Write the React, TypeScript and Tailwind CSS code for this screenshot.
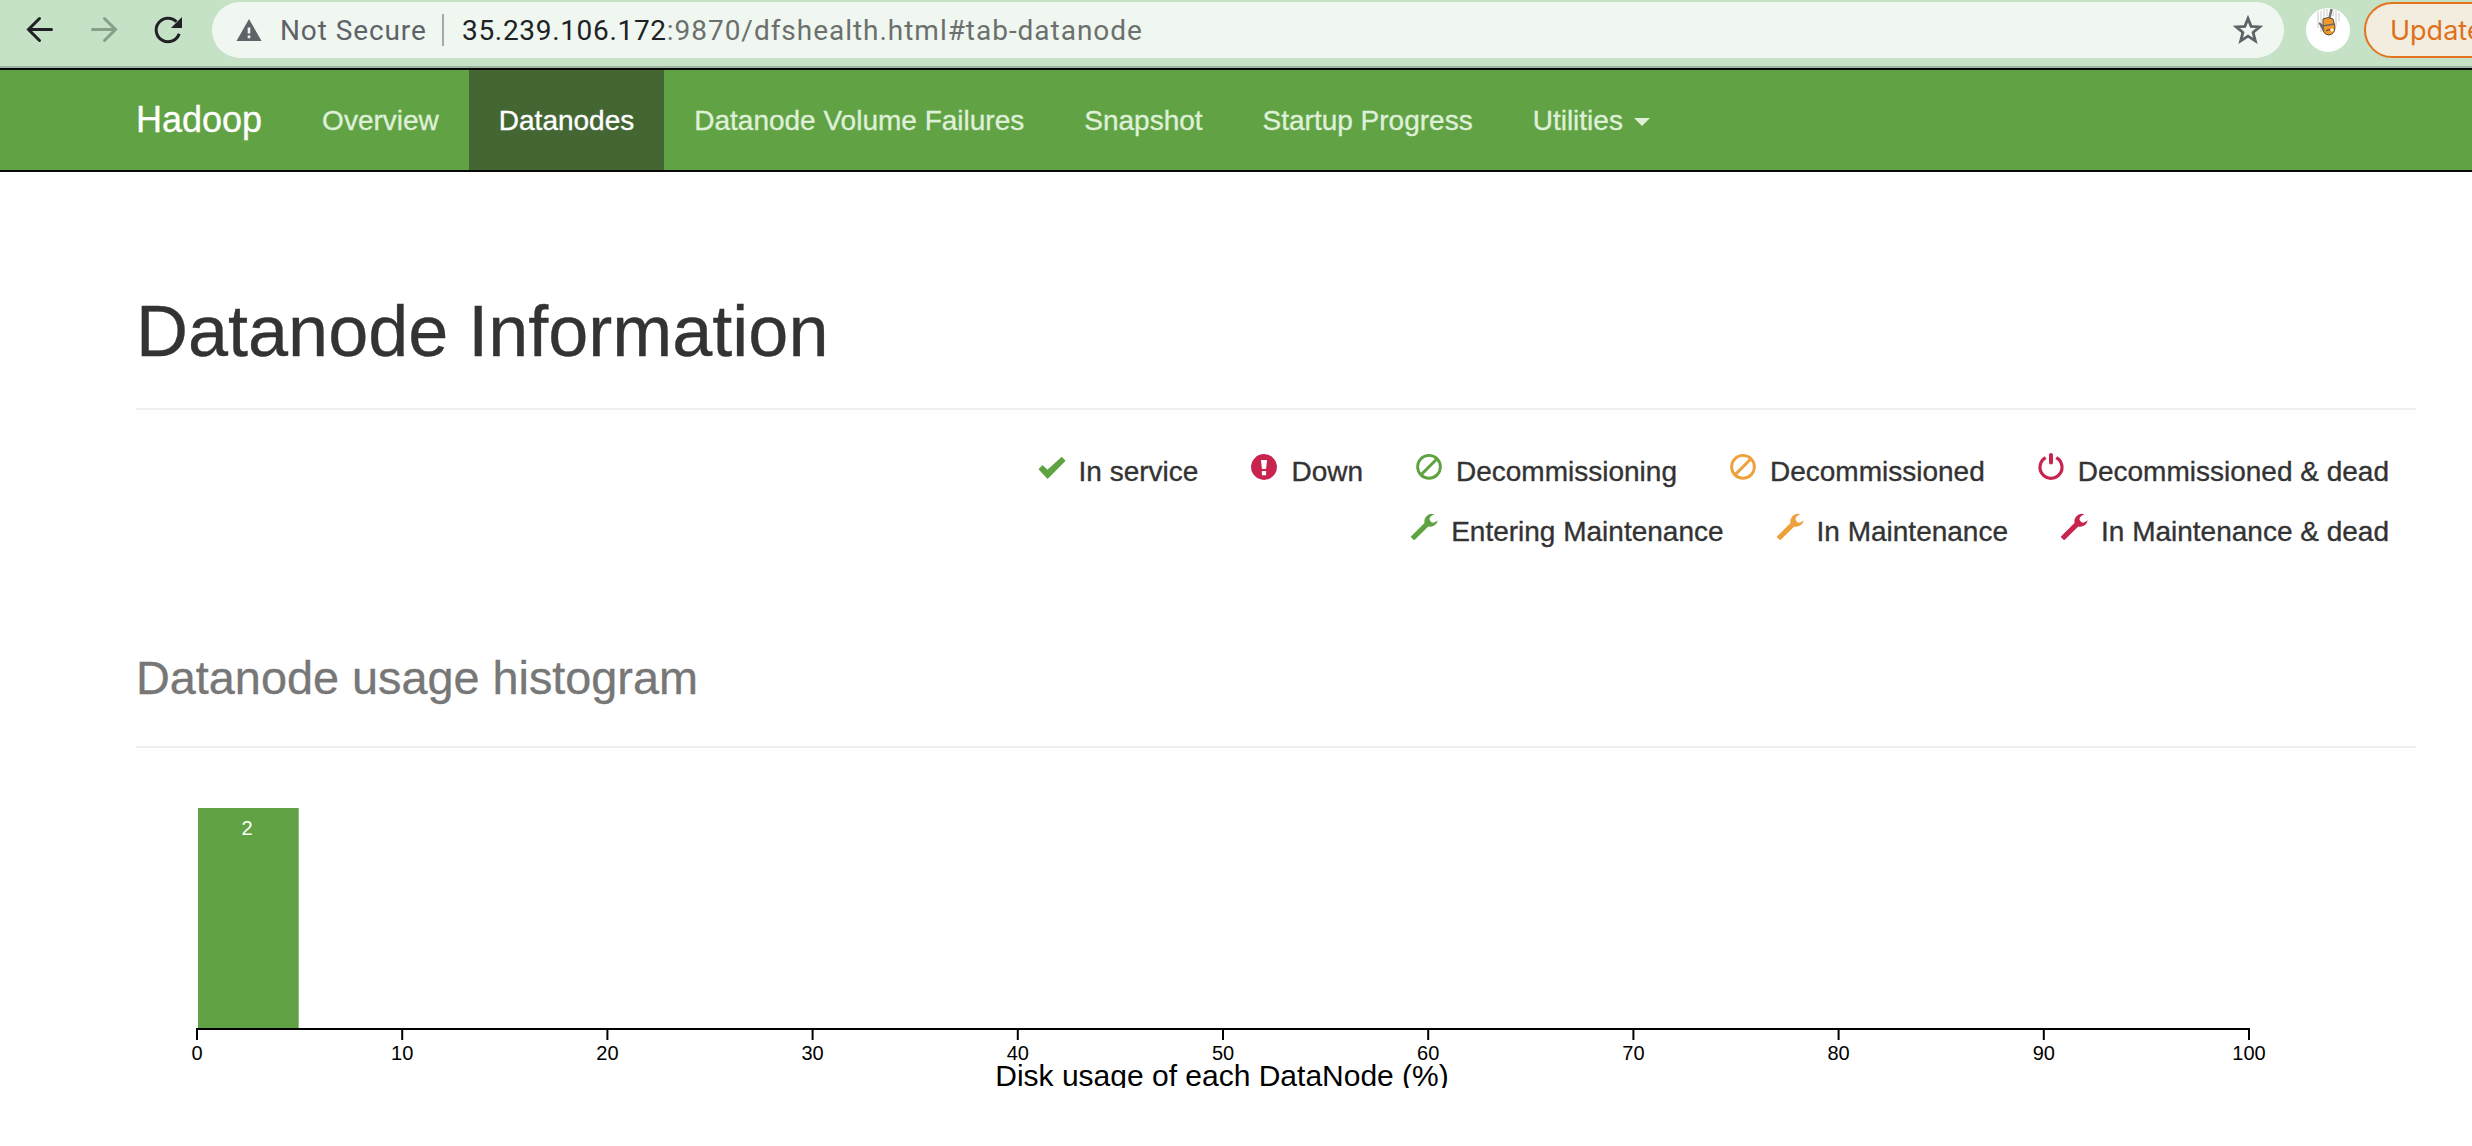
import React from "react";

const GREEN = "#5fa341";
const ORANGE = "#eea03c";
const RED = "#c7254e";

function Ok() {
  return (
    <svg className="h-7 w-7 shrink-0" viewBox="0 0 28 28">
      <path d="M.9 15.700 4.100 12.400q.5-.5 1 0l4.300 4.300L23.200 4.200q.5-.4 1 0l3 3q.4.500 0 1L10.100 25.400q-.5.5-1 0L.9 16.700q-.4-.5 0-1Z" fill={GREEN} />
    </svg>
  );
}
function Alert() {
  return (
    <svg className="h-7 w-7 shrink-0" viewBox="0 0 28 28">
      <circle cx="14" cy="14" r="12.900" fill={RED} />
      <path d="M11.700 7h4.600a.7.7 0 0 1 .7.8l-.9 7.600a.9.9 0 0 1-.9.7h-2.400a.9.9 0 0 1-.9-.7L11 7.800a.7.7 0 0 1 .7-.8Z" fill="#fff" />
      <rect x="11.900" y="18" width="4.200" height="4.200" rx=".5" fill="#fff" />
    </svg>
  );
}
function Ban({ color }: { color: string }) {
  return (
    <svg className="h-7 w-7 shrink-0" viewBox="0 0 28 28" fill="none" stroke={color} strokeWidth="2.900">
      <circle cx="14" cy="13.800" r="11.400" />
      <path d="M6.200 21.600 21.800 6" />
    </svg>
  );
}
function Power() {
  return (
    <svg className="h-7 w-7 shrink-0" viewBox="0 0 28 28" fill="none" stroke={RED} strokeWidth="3.200">
      <path d="M8.700 4.700A11 11 0 1 0 19.300 4.700" />
      <path d="M14 2V9.500" strokeLinecap="round" strokeWidth="4" />
    </svg>
  );
}
function Wrench({ color }: { color: string }) {
  return (
    <svg className="h-7 w-7 shrink-0" viewBox="0 0 28 28">
      <path d="M24.500 1.300Q19.500-.4 16.200 3.400 13.800 6.200 14.500 10L1.200 23.200q-.6.6 0 1.200l2.400 2.400q.6.600 1.200 0L18.300 13.600q3.700.8 6.700-1.600 2.500-2 2.600-4.800-2.200 2.400-4.700 2.500-2.300-.5-3.300-3-.6-3 4.900-5.400Z" fill={color} />
    </svg>
  );
}

function Item({ icon, children }: { icon: React.ReactNode; children: React.ReactNode }) {
  return (
    <li className="flex items-start gap-[13px] whitespace-nowrap">
      {icon}
      <span className="mt-[-1px] leading-10">{children}</span>
    </li>
  );
}

const NAV = ["Overview", "Datanodes", "Datanode Volume Failures", "Snapshot", "Startup Progress"];

function Chart() {
  return (
    <svg className="block" width="2280" height="340" viewBox="136 748 2280 340" fontFamily="Liberation Sans, Arial, sans-serif">
      <rect x="198" y="808" width="100.700" height="220" fill="#61a244" />
      <text x="247" y="835" fontSize="20" textAnchor="middle" fill="#fff">2</text>
      <path d="M197 1040V1029H2249V1040" fill="none" stroke="#000" strokeWidth="2" />
      {Array.from({ length: 11 }, (_, i) => (
        <g key={i}>
          <path d={`M${197 + i * 205.2} 1029V1040`} stroke="#000" strokeWidth="2" />
          <text x={197 + i * 205.2} y="1060" fontSize="20" textAnchor="middle">{i * 10}</text>
        </g>
      ))}
      <text x="1222" y="1086" fontSize="30" textAnchor="middle">Disk usage of each DataNode (%)</text>
    </svg>
  );
}

export default function App() {
  return (
    <div className="h-[1146px] w-[2472px] overflow-hidden bg-white font-['Liberation_Sans',Arial,sans-serif] text-[28px] text-[#333] [-webkit-text-stroke:0.35px]">
      <header className="flex h-[68px] items-start overflow-hidden border-b-2 border-[#9db4a0] bg-[#c5e2c6] pt-0.5 font-[Roboto,sans-serif] [-webkit-text-stroke:0px]">
        <div className="flex h-14 w-[212px] shrink-0 items-center">
          <svg width="212" height="56" viewBox="0 2 212 56" fill="none" strokeWidth="3">
            <path d="M51.500 29.500H29M39.500 18.500 28.500 29.500 39.500 40.500" stroke="#202124" strokeLinecap="round" />
            <path d="M92.500 29.500H115M104.500 18.500 115.500 29.500 104.500 40.500" stroke="#85a087" strokeLinecap="round" />
            <path d="M176.500 21.800A11.800 11.800 0 1 0 179.200 33.700" stroke="#202124" />
            <path d="M182 17V28H171Z" fill="#202124" />
          </svg>
        </div>
        <div className="flex h-14 w-[2072px] shrink-0 items-center rounded-full bg-[#f0f7f0] pr-[21px] pl-6">
          <svg className="shrink-0" width="26" height="24" viewBox="0 0 26 24">
            <path d="M13 1 25.500 23H.5Z" fill="#5f6368" />
            <path d="M11.700 9.500h2.600v6h-2.600zM11.700 17.500h2.600v2.800h-2.600z" fill="#f0f7f0" />
          </svg>
          <span className="mt-0.5 ml-[18px] w-[162px] whitespace-nowrap tracking-[0.9px] text-[#5f6368]">Not Secure</span>
          <span className="h-8 w-0.5 bg-[#a4a9a6]" />
          <span className="mt-0.5 ml-[18px] grow whitespace-nowrap tracking-[0.97px] text-[#6b706d]"><span className="tracking-[0.68px] text-[#202124]">35.239.106.172</span>:9870/dfshealth.html#tab-datanode</span>
          <svg width="30" height="30" viewBox="0 0 30 30">
            <path d="M15 3.500 18.100 11.300 26.700 11.900 20.100 17.400 22.300 25.900 15 21.100 7.700 25.900 9.900 17.400 3.300 11.900 11.900 11.300Z" fill="none" stroke="#5f6368" strokeWidth="2.800" />
          </svg>
        </div>
        <svg className="mt-1.5 ml-[22px] shrink-0" width="44" height="44" viewBox="0 0 44 44">
          <circle cx="22" cy="22" r="22" fill="#fff" />
          <path d="M12 4V20M15 3V24M18 1V12M30 2V18M33 5V13M21 1V8M27 1V8" stroke="#c9c9c9" strokeWidth="1" />
          <path d="M25.500 1 23.500 10" stroke="#777" strokeWidth="2.500" />
          <path d="M17 11q5-3 10 0l2 8q0 7-6 8-7-1-6-8Z" fill="#f0992d" stroke="#5b4a2e" strokeWidth="1" />
          <path d="M13 15l4 3 11-2M14 16l4 7" stroke="#666" strokeWidth="1.600" fill="none" />
          <path d="M20 23q2-2 4-1" stroke="#443322" strokeWidth="1" fill="none" />
          <circle cx="26" cy="22" r="1.500" fill="#fff" />
        </svg>
        <div className="ml-3.5 flex h-14 w-[200px] shrink-0 items-center rounded-full border-2 border-[#e27420] bg-[#f2eddf] pt-0.5 pl-6 font-[Inter,sans-serif] text-[27px] text-[#e0701c]">Update</div>
      </header>
      <nav className="flex h-[104px] items-stretch border-y-2 border-[#080808] bg-[#61a244] pl-[106px] whitespace-nowrap text-[#dff0d8]">
        <div className="flex items-center px-[30px] text-[36px] text-white">Hadoop</div>
        {NAV.map((n) => (
          <a key={n} className={n === "Datanodes" ? "flex items-center bg-[#446633] px-[30px] pt-0.5 text-white" : "flex items-center px-[30px] pt-0.5"}>{n}</a>
        ))}
        <a className="flex items-center px-[30px] pt-0.5">
          Utilities
          <span className="mt-0.5 ml-[11px] border-x-8 border-t-8 border-x-transparent border-t-[#dff0d8]" />
        </a>
      </nav>
      <main className="flex flex-col pr-14 pl-[136px]">
        <h1 className="h-[238px] border-b-2 border-[#eee] pt-[119px] text-[72px] leading-[80px]">Datanode Information</h1>
        <div className="flex flex-col items-end pt-[43px] pr-[27px]">
          <ul className="flex h-[60px] gap-[52px]">
            <Item icon={<Ok />}>In service</Item>
            <Item icon={<Alert />}>Down</Item>
            <Item icon={<Ban color={GREEN} />}>Decommissioning</Item>
            <Item icon={<Ban color={ORANGE} />}>Decommissioned</Item>
            <Item icon={<Power />}>Decommissioned &amp; dead</Item>
          </ul>
          <ul className="flex h-[60px] gap-[52px]">
            <Item icon={<Wrench color={GREEN} />}>Entering Maintenance</Item>
            <Item icon={<Wrench color={ORANGE} />}>In Maintenance</Item>
            <Item icon={<Wrench color={RED} />}>In Maintenance &amp; dead</Item>
          </ul>
        </div>
        <h3 className="h-[175px] border-b-2 border-[#eee] pt-[78px] text-[46.8px] leading-[54px] text-[#777]">Datanode usage histogram</h3>
        <Chart />
      </main>
    </div>
  );
}
